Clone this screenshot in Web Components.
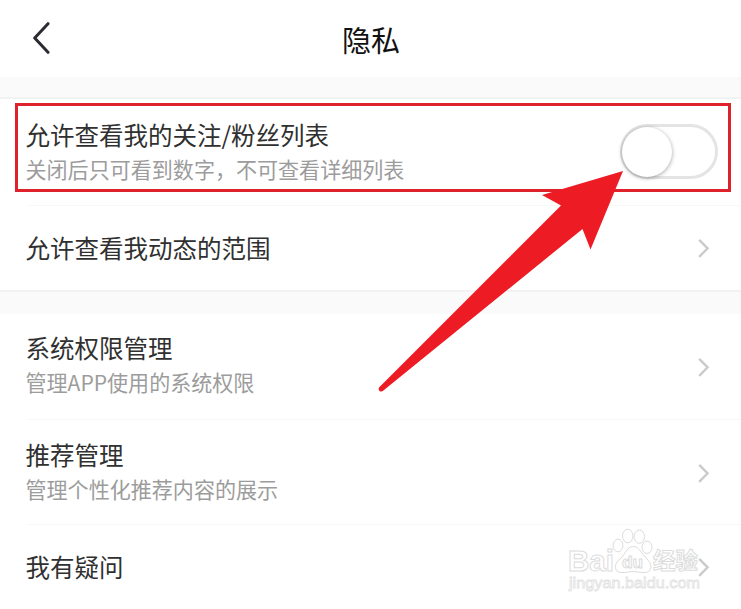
<!DOCTYPE html>
<html lang="zh-CN">
<head>
<meta charset="utf-8">
<title>隐私</title>
<style>
    html, body { margin: 0; height: 100%; overflow: hidden; }
    body {
        background: #fff;
        color: #303030;
        font-family: "Noto Sans CJK SC", "Noto Sans", sans-serif;
    }
</style>
</head>
<body>
<privacy-page></privacy-page>
<script>
class BaseElement extends HTMLElement {
    constructor() {
        super();
        this.attachShadow({ mode: 'open' });
    }

    connectedCallback() {
        const template = document.createElement('template');
        template.innerHTML = `<style>${this.constructor.style}</style>${this.html}`;
        this.shadowRoot.innerHTML = '';
        this.shadowRoot.appendChild(template.content.cloneNode(true));
    }
}

class NavHeader extends BaseElement {
    static get style() {
        return `
            :host {
                display: grid;
                grid-template-columns: 80px 1fr 80px;
                align-items: center;
                height: 77px;
                flex: none;
            }
            svg { display: block; margin: 0 0 1px 30px; }
            h1 {
                margin: 0;
                padding-left: 1px;
                font-size: 29px;
                font-weight: 400;
                line-height: 40px;
                text-align: center;
                color: #111;
            }
        `;
    }

    get html() {
        return `
            <svg width="20" height="34" viewBox="0 0 20 34" fill="none" stroke="#2b2c31" stroke-width="3" stroke-linecap="round" stroke-linejoin="round">
                <path d="M18 2.7 4.700 17 18 31.300"/>
            </svg>
            <h1><slot></slot></h1>
        `;
    }
}

class ToggleSwitch extends BaseElement {
    static get style() {
        return `
            :host {
                display: flex;
                box-sizing: border-box;
                width: 98px;
                height: 55px;
                margin-bottom: 2px;
                border: 3px solid #e4e4e4;
                border-radius: 28px;
                background: #fff;
            }
            span {
                width: 50px;
                height: 50px;
                margin: -.5px 0 0 -1px;
                border-radius: 50%;
                background: #fff;
                box-shadow: 0 1px 4px rgba(0, 0, 0, .36);
            }
        `;
    }

    get html() {
        return '<span></span>';
    }
}

class SettingRow extends BaseElement {
    static get style() {
        return `
            :host {
                display: flex;
                align-items: center;
                justify-content: space-between;
                box-sizing: border-box;
                padding: 0 23px 0 25.5px;
                flex: none;
            }
            .text { padding-bottom: var(--lift, 1px); }
            .title {
                font-size: 24.5px;
                line-height: 36px;
                white-space: nowrap;
            }
            ::slotted([slot="note"]) {
                display: block;
                font-size: 21.05px;
                line-height: 32px;
                white-space: nowrap;
                color: #9c9c9c;
            }
            svg { display: block; margin-right: 7px; }
        `;
    }

    get html() {
        return `
            <div class="text">
                <div class="title"><slot></slot></div>
                <slot name="note"></slot>
            </div>
            <slot name="action">
                <svg width="14" height="22" viewBox="0 0 14 22" fill="none" stroke="#cbcbcb" stroke-width="2.400">
                    <path d="M2.200 2.800 10.600 11.300 2.200 19.800"/>
                </svg>
            </slot>
        `;
    }
}

class SettingGroup extends BaseElement {
    static get style() {
        return `
            :host { display: flex; flex-direction: column; flex: none; }
            .gap { background: #fafafa; height: var(--gap, 22px); box-sizing: border-box; }
            :host([edge="top"]) .gap { border-top: 2px solid #f2f2f2; }
            :host([edge="bottom"]) .gap { border-bottom: 2px solid #f1f3f3; }
            ::slotted(setting-row:not(:last-child)) {
                background: linear-gradient(#f8f8f8, #f8f8f8) 26px 100% / 100% 1px no-repeat;
            }
        `;
    }

    get html() {
        return '<div class="gap"></div><slot></slot>';
    }
}

// red frame and arrow pointing at the switch
class GuideMark extends BaseElement {
    static get style() {
        return `
            :host { position: absolute; inset: 0; pointer-events: none; }
            svg { display: block; }
        `;
    }

    get html() {
        return `
            <svg width="741" height="609" viewBox="0 0 741 609">
                <rect x="16.5" y="104.5" width="713" height="86" fill="none" stroke="#df212b" stroke-width="3"/>
                <path fill="#ed1c24" d="M623 171 542 195 561 205.5 379 387.5Q378 390 380 391.5 382 392 384 390L582.5 229 590.5 249.5Z"/>
            </svg>
        `;
    }
}

class BrandWatermark extends BaseElement {
    static get style() {
        return `
            :host { position: absolute; left: 560px; top: 522px; pointer-events: none; }
            svg { display: block; }
            text { font-family: "Liberation Sans", "Noto Sans CJK SC", sans-serif; font-weight: 700; }
            .site { font-weight: 400; stroke: #e2e2e2; stroke-width: .8; }
        `;
    }

    get html() {
        return `
            <svg width="150" height="80" viewBox="0 0 150 80" fill="#fff" stroke="#dcdcdc" stroke-width="1">
                <text x="8" y="49" font-size="30" textLength="46" lengthAdjust="spacingAndGlyphs">Bai</text>
                <path d="M73.300 24.500C79 24.500 81 31 86 36 93 42 92.500 50 85 50.500 80 51 77 49.500 73.300 49.500S66 51 61 50.500C54 50 53.500 42 60 37 65.500 32 67 24.500 73.300 24.500Z"/>
                <ellipse cx="58" cy="23.500" rx="4.900" ry="6.300"/>
                <ellipse cx="67.700" cy="14" rx="5.200" ry="6.800"/>
                <ellipse cx="79.300" cy="14.700" rx="5.300" ry="6.600"/>
                <ellipse cx="87" cy="25.300" rx="5" ry="6.200"/>
                <text x="62" y="46" font-size="17" textLength="21" lengthAdjust="spacingAndGlyphs">du</text>
                <text x="93" y="47" font-size="23" textLength="45" lengthAdjust="spacingAndGlyphs">经验</text>
                <text class="site" x="9" y="66" font-size="15" textLength="131" lengthAdjust="spacingAndGlyphs">jingyan.baidu.com</text>
            </svg>
        `;
    }
}

class PrivacyPage extends BaseElement {
    static get style() {
        return `
            :host {
                display: flex;
                flex-direction: column;
                position: relative;
                width: 741px;
                height: 609px;
                overflow: hidden;
                background: #fff;
            }
            .first { --gap: 22px; }
            .second { --gap: 24px; }
            .switch { height: 107px; --lift: 4px; }
            .range { height: 84px; }
            .system { height: 106px; --lift: 6px; }
            .recommend { height: 105px; --lift: 4px; }
            .question { height: 84px; }
        `;
    }

    get html() {
        return `
            <nav-header>隐私</nav-header>
            <setting-group class="first" edge="bottom">
                <setting-row class="switch">允许查看我的关注/粉丝列表<span slot="note">关闭后只可看到数字，不可查看详细列表</span><toggle-switch slot="action"></toggle-switch></setting-row>
                <setting-row class="range">允许查看我动态的范围</setting-row>
            </setting-group>
            <setting-group class="second" edge="top">
                <setting-row class="system">系统权限管理<span slot="note">管理APP使用的系统权限</span></setting-row>
                <setting-row class="recommend">推荐管理<span slot="note">管理个性化推荐内容的展示</span></setting-row>
                <setting-row class="question">我有疑问</setting-row>
            </setting-group>
            <brand-watermark></brand-watermark>
            <guide-mark></guide-mark>
        `;
    }
}

customElements.define('nav-header', NavHeader);
customElements.define('toggle-switch', ToggleSwitch);
customElements.define('setting-row', SettingRow);
customElements.define('setting-group', SettingGroup);
customElements.define('guide-mark', GuideMark);
customElements.define('brand-watermark', BrandWatermark);
customElements.define('privacy-page', PrivacyPage);
</script>
</body>
</html>
